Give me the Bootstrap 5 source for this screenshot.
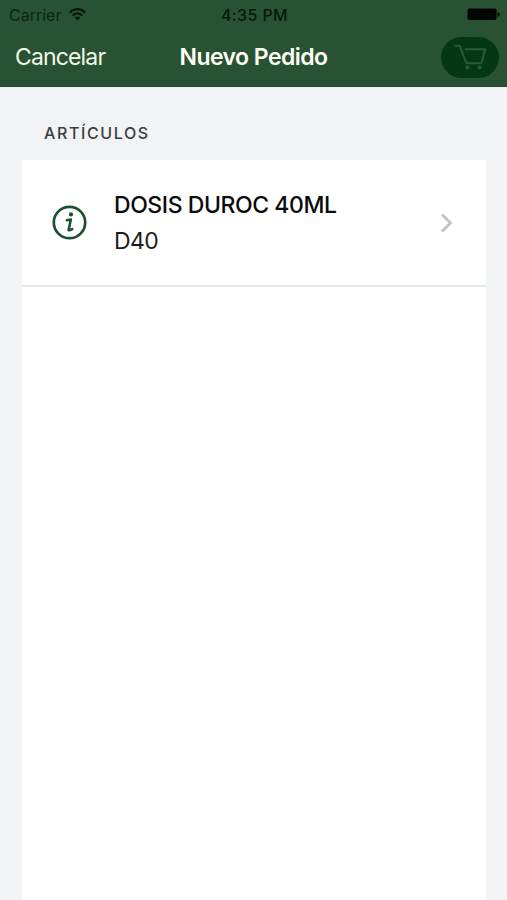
<!DOCTYPE html>
<html lang="es">
<head>
<meta charset="utf-8">
<meta name="viewport" content="width=device-width, initial-scale=1">
<title>Nuevo Pedido</title>
<link href="https://cdn.jsdelivr.net/npm/bootstrap@5.3.0/dist/css/bootstrap.min.css" rel="stylesheet">
<style>
body { background: #f1f3f5; font-family: Inter, "Liberation Sans", sans-serif; color: #0b0b0b; line-height: 1; }
.app-top { background: #295232; height: 87px; border-bottom: 1px solid #234a2d; }
.status-bar { height: 29px; font-size: 16px; color: #06180a; padding: 0 7px 0 9px; }
.status-side { width: 200px; }
.carrier { letter-spacing: 0; color: #0c2411; }
.clock { font-weight: 500; letter-spacing: .4px; }
.title-bar { height: 56px; padding: 0 8px 0 15px; }
.nav-side { width: 120px; }
.nav-side-end { width: 127px; }
.cancel-link { font-size: 23px; letter-spacing: -.85px; color: #f2f8ea; }
.page-title { font-size: 23px; font-weight: 600; letter-spacing: -.55px; color: #fffff6; }
.cart-pill { width: 58px; height: 41px; border-radius: 21px; background: #043813; }
.section-title { font-size: 16px; letter-spacing: 1.6px; color: #3b3d40; padding: 37px 0 0 44px; height: 73px; }
.article-panel { margin: 0 21px 0 22px; }
.article-row { height: 127px; border-bottom: 2px solid #e5e6e8 !important; padding: 0 33px 0 30px; }
.article-name { font-size: 23px; font-weight: 450; letter-spacing: -.43px; line-height: 36px; }
.article-code { font-size: 23px; letter-spacing: -.6px; line-height: 36px; color: #1c1c1c; }
.article-text { margin-left: 27px; }
</style>
</head>
<body>
<div class="vh-100 d-flex flex-column overflow-hidden">
  <header class="app-top flex-shrink-0">
    <div class="status-bar d-flex align-items-center justify-content-between">
      <div class="status-side d-flex align-items-center">
        <span class="carrier">Carrier</span>
        <svg class="ms-2" width="17" height="13" viewBox="0 0 17 13" fill="none" stroke="#06180a" stroke-width="2.1"><path d="M.8 4.800C5-.1 12-.1 16.200 4.800M3.600 7.600c2.700-3 7.100-3 9.800 0"/><path d="M8.500 12.500 5.600 9.500c1.700-1.500 4.100-1.500 5.800 0z" fill="#06180a" stroke="none"/></svg>
      </div>
      <span class="clock">4:35 PM</span>
      <div class="status-side d-flex justify-content-end">
        <svg width="33" height="13" viewBox="0 0 33 13"><rect x=".5" y=".5" width="29" height="11.500" rx="1.800" fill="#020603"/><path d="M30.500 4v5c1.600-.4 2.200-1.300 2.200-2.500S32.100 4.400 30.500 4z" fill="#020603"/></svg>
      </div>
    </div>
    <div class="title-bar d-flex align-items-center justify-content-between">
      <a href="#" class="nav-side cancel-link text-decoration-none">Cancelar</a>
      <span class="page-title">Nuevo Pedido</span>
      <div class="nav-side-end d-flex justify-content-end">
        <button class="cart-pill border-0 p-0 d-flex" aria-label="Carrito">
          <svg width="58" height="41" viewBox="0 0 58 41" fill="none" stroke="#2c5a39" stroke-width="2" stroke-linejoin="round"><path d="M13.500 8.700h5.200l6.600 17.500h15.400M24 12.200h20l-3.200 13.200"/><circle cx="26.500" cy="30.500" r="2.100" fill="#2c5a39" stroke="none"/><circle cx="38.500" cy="30.500" r="2.100" fill="#2c5a39" stroke="none"/></svg>
        </button>
      </div>
    </div>
  </header>
  <h1 class="section-title m-0 fw-medium flex-shrink-0">ARTÍCULOS</h1>
  <main class="article-panel bg-white flex-grow-1">
    <div class="article-row d-flex align-items-center">
      <svg class="flex-shrink-0" width="35" height="35" viewBox="0 0 35 35" fill="none" stroke="#1d5030"><circle cx="17.500" cy="17.500" r="15.700" stroke-width="2.700"/><circle cx="19" cy="9.400" r="2.100" fill="#1d5030" stroke="none"/><path d="M14.800 15.200l4-.7-2.200 10.700c1.400.3 2.600-.2 3.700-1.100" stroke-width="2.600" stroke-linecap="round" stroke-linejoin="round"/></svg>
      <div class="article-text flex-grow-1">
        <div class="article-name">DOSIS DUROC 40ML</div>
        <div class="article-code">D40</div>
      </div>
      <svg width="13" height="20" viewBox="0 0 13 20" fill="none" stroke="#c2c2c5" stroke-width="2.800"><path d="M2 1.500 10.500 10 2 18.500"/></svg>
    </div>
  </main>
</div>
<script src="https://cdn.jsdelivr.net/npm/bootstrap@5.3.0/dist/js/bootstrap.bundle.min.js"></script>
</body>
</html>
